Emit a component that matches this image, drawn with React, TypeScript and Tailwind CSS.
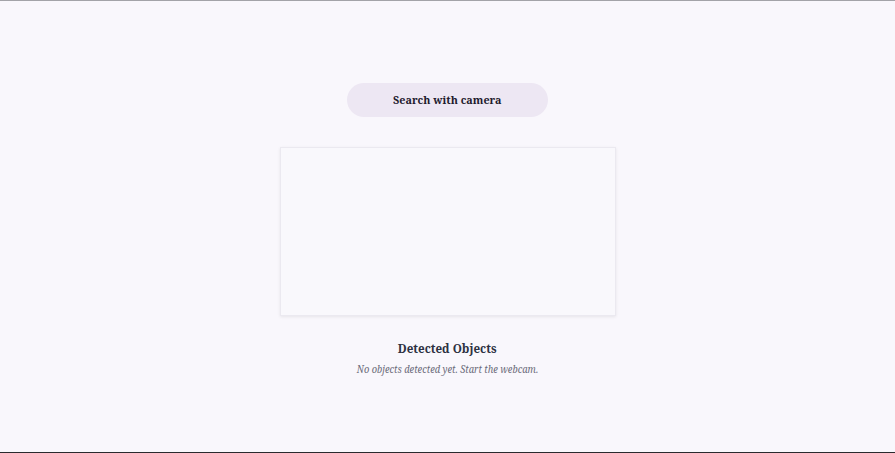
import React from "react";

export default function App() {
  return (
    <div className="w-[895px] h-[453px] bg-[#f9f7fc] border-t border-t-[#a3a3a8] border-b border-b-[#2a2a2e] flex flex-col items-center overflow-hidden" style={{ fontFamily: '"Noto Serif", "DejaVu Serif", serif' }}>
      <button className="mt-[82px] w-[201px] h-[34px] rounded-full bg-[#ede7f3] text-[#1f1b2e] text-[11.6px] font-bold flex items-center justify-center">
        <span className="inline-block scale-x-[0.93]">Search with camera</span>
      </button>
      <div className="mt-[30px] w-[336px] h-[169px] bg-[#f9f8fc] border border-[#ebe9f0] shadow-[0_1px_3px_rgba(0,0,0,0.08)]" />
      <h2 className="mt-[24px] text-[12.5px] font-bold text-[#2d3142] leading-[18px] scale-x-[0.93]">Detected Objects</h2>
      <p className="mt-[4px] text-[10px] italic text-[#6b6b7a] leading-[14px] scale-x-[0.93]">No objects detected yet. Start the webcam.</p>
    </div>
  );
}
